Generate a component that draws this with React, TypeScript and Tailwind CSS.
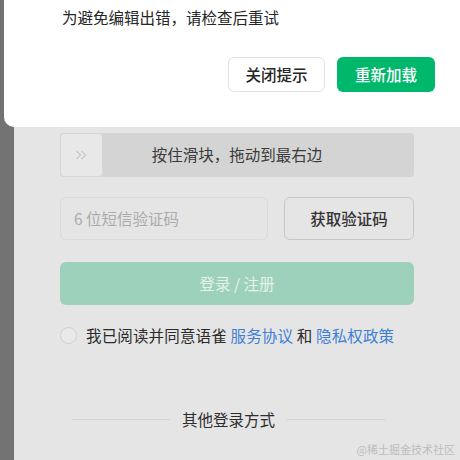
import React from 'react';

const font = { fontFamily: '"Noto Sans CJK SC", "Noto Sans", sans-serif' };

export default function App() {
  return (
    <div style={font} className="relative flex h-[460px] w-[460px] overflow-hidden bg-[#e5e5e5] text-[#262626]">
      {/* dimmed edge of the page behind */}
      <div className="w-[14px] shrink-0 bg-[#737373]" />

      {/* login form */}
      <div className="flex flex-1 flex-col px-[46px] pt-[133px]">
        {/* slide captcha */}
        <div className="relative flex h-[44px] items-center justify-center rounded-[4px] bg-[#d4d4d4]">
          <div className="absolute left-0 top-0 flex h-[44px] w-[43px] items-center justify-center rounded-[4px] border border-[#d6d6d6] bg-[#e8e8e8]">
            <svg width="13" height="10" viewBox="0 0 13 10" fill="none" stroke="#b3b3b3" strokeWidth="1">
              <path d="M1.5 1 L5.5 5 L1.5 9" />
              <path d="M6.5 1 L10.5 5 L6.5 9" />
            </svg>
          </div>
          <span className="text-[15.5px] text-[#3a3a3a]">按住滑块，拖动到最右边</span>
        </div>

        {/* sms code */}
        <div className="mt-[20px] flex gap-[16px]">
          <div className="flex h-[43px] w-[208px] items-center rounded-[6px] border border-[#d9d9d9] pl-[13px] text-[15.5px] text-[#ababab]">
            6 位短信验证码
          </div>
          <div className="flex h-[43px] flex-1 items-center justify-center rounded-[6px] border border-[#c8c8c8] text-[15.5px] font-medium text-[#333]">
            获取验证码
          </div>
        </div>

        {/* submit */}
        <div className="mt-[22px] flex h-[43px] items-center justify-center rounded-[6px] bg-[#9ed1bb] text-[15.5px] text-[#e4f2ec]">
          登录 / 注册
        </div>

        {/* agreement */}
        <div className="mt-[19px] flex items-center">
          <span className="h-[17px] w-[17px] rounded-full border border-[#cfcfcf] bg-[#e9e9e9]" />
          <span className="ml-[9px] text-[15.5px] tracking-[0.15px] text-[#2a2a2a]">
            我已阅读并同意语雀 <span className="text-[#3f7fd6]">服务协议</span> 和{' '}
            <span className="text-[#3f7fd6]">隐私权政策</span>
          </span>
        </div>

        {/* other login */}
        <div className="mt-[61px] ml-[12px] mr-[29px] flex items-center">
          <div className="h-px flex-1 bg-[#d3d3d3]" />
          <span className="mx-[12px] text-[15.5px] text-[#2e2e2e]">其他登录方式</span>
          <div className="h-px flex-1 bg-[#d3d3d3]" />
        </div>
      </div>

      {/* reload dialog */}
      <div className="absolute left-[4px] right-0 top-0 h-[127px] rounded-bl-[10px] bg-white">
        <p className="pl-[58px] pt-[5px] text-[15.5px] leading-[24px] text-[#262626]">为避免编辑出错，请检查后重试</p>
        <div className="mt-[28px] flex justify-end gap-[12px] pr-[25px]">
          <button className="h-[35px] w-[97px] rounded-[6px] border border-[#e2e2e2] bg-white text-[15.5px] font-medium text-[#262626]">
            关闭提示
          </button>
          <button className="h-[35px] w-[98px] rounded-[6px] bg-[#00b86b] text-[15.5px] font-medium text-white">
            重新加载
          </button>
        </div>
      </div>

      {/* watermark */}
      <span className="absolute bottom-[3px] right-[5px] text-[11px] text-[#bdbdbd]">@稀土掘金技术社区</span>
    </div>
  );
}
